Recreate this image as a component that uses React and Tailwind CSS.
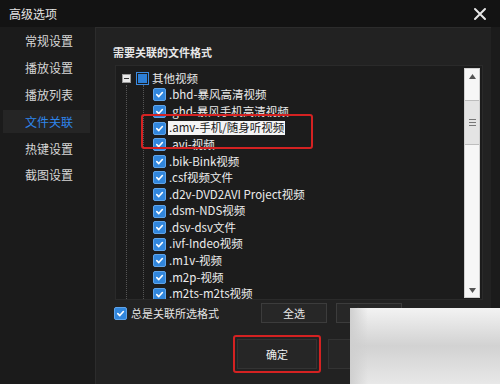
import React from 'react';

const font = { fontFamily: '"Noto Sans CJK SC", "Noto Sans", sans-serif' };

const sideItems = ['常规设置', '播放设置', '播放列表', '文件关联', '热键设置', '截图设置'];

const formats = [
  '.bhd-暴风高清视频',
  '.ghd-暴风手机高清视频',
  '.amv-手机/随身听视频',
  '.avi-视频',
  '.bik-Bink视频',
  '.csf视频文件',
  '.d2v-DVD2AVI Project视频',
  '.dsm-NDS视频',
  '.dsv-dsv文件',
  '.ivf-Indeo视频',
  '.m1v-视频',
  '.m2p-视频',
  '.m2ts-m2ts视频',
];

const Check = ({ className = '' }) => (
  <span className={`w-[13px] h-[13px] rounded-[2px] bg-[#3186dc] border border-[#5fa4ea] flex items-center justify-center shrink-0 ${className}`}>
    <svg width="9" height="9" viewBox="0 0 10 10">
      <path d="M2 5.2 L4.2 7.3 L8.2 2.8" stroke="#fff" strokeWidth="1.8" fill="none" strokeLinecap="round" strokeLinejoin="round" />
    </svg>
  </span>
);

export default function App() {
  return (
    <div className="w-[500px] h-[384px] bg-[#1b1b1b] relative overflow-hidden flex flex-col text-[#dcdcdc]" style={font}>
      {/* Title bar */}
      <div className="h-[27px] bg-[#131313] flex items-center justify-between pl-[9px] pr-[13px] shrink-0">
        <span className="text-[12px] text-[#e4e4e4]">高级选项</span>
        <svg width="14" height="14" viewBox="0 0 14 14">
          <path d="M2 2 L12 12 M12 2 L2 12" stroke="#e6e6e6" strokeWidth="2" strokeLinecap="round" />
        </svg>
      </div>

      <div className="flex-1 flex min-h-0">
        {/* Sidebar */}
        <div className="w-[95px] shrink-0 pt-[1px] flex flex-col">
          {sideItems.map((s, i) => (
            <div key={s} className="h-[26.8px] flex items-center pl-[3px] pr-[5px]">
              <div className={`w-full h-[23px] flex items-center pl-[22px] text-[12px] ${i === 3 ? 'bg-[#252525] text-[#2f86ec]' : 'text-[#d6d6d6]'}`}>
                {s}
              </div>
            </div>
          ))}
        </div>

        {/* Main panel */}
        <div className="w-[396px] bg-[#222222] border-t border-l border-[#2c2c2c] flex flex-col">
          <div className="h-[37px] flex items-center pl-[17px] pt-[12px] text-[11px] font-bold text-[#e8e8e8] shrink-0">
            需要关联的文件格式
          </div>

          {/* List box */}
          <div className="ml-[19px] w-[368px] h-[235px] bg-[#1c1c1c] border border-[#2a2a2a] flex shrink-0 relative">
            <div className="flex-1 pt-[4px] relative overflow-hidden">
              {/* tree lines */}
              <div className="absolute left-[10px] top-[19px] bottom-0 border-l border-dotted border-[#555]" />
              <div className="absolute left-[27px] top-[19px] bottom-0 border-l border-dotted border-[#555]" />

              <div className="h-[16.6px] flex items-center relative">
                <span className="ml-[6px] w-[9px] h-[9px] bg-[#e8e8e8] border border-[#9a9a9a] flex items-center justify-center">
                  <span className="w-[5px] h-[1px] bg-[#333]" />
                </span>
                <span className="ml-[5px] w-[13px] h-[13px] border border-[#3b8ae0] bg-[#1c1c1c] flex items-center justify-center">
                  <span className="w-[9px] h-[9px] bg-[#2d7fd6]" />
                </span>
                <span className="ml-[3px] text-[11.5px] text-[#e6e6e6] leading-none">其他视频</span>
              </div>
              {formats.map((f, i) => (
                <div key={f} className="h-[16.6px] flex items-center pl-[37px] relative">
                  <Check />
                  <span
                    className={`ml-[2px] text-[11.5px] leading-none whitespace-nowrap px-[1px] py-[1px] ${
                      i === 2 ? 'bg-[#f4f4f4] text-[#1a1a1a]' : 'text-[#ececec]'
                    }`}
                  >
                    {f}
                  </span>
                </div>
              ))}
              {/* red highlight */}
              <div className="absolute left-[25px] top-[48px] w-[172px] h-[35px] border-2 border-[#d42222] rounded-[3px]" />
            </div>

            {/* Scrollbar */}
            <div className="w-[16px] mt-[2px] mb-[1px] mr-[2px] bg-[#f6f6f6] border border-[#d0d0d0] flex flex-col items-center">
              <div className="h-[14px] flex items-center justify-center">
                <svg width="7" height="5" viewBox="0 0 7 5"><path d="M0 5 L3.5 0 L7 5 Z" fill="#555" /></svg>
              </div>
              <div className="w-full mt-[17px] h-[45px] bg-[#e4e4e4] border-y border-[#bdbdbd] flex flex-col items-center justify-center gap-[2px]">
                <span className="w-[7px] h-[1px] bg-[#777]" />
                <span className="w-[7px] h-[1px] bg-[#777]" />
                <span className="w-[7px] h-[1px] bg-[#777]" />
              </div>
              <div className="flex-1" />
              <div className="h-[14px] flex items-center justify-center">
                <svg width="7" height="5" viewBox="0 0 7 5"><path d="M0 0 L3.5 5 L7 0 Z" fill="#555" /></svg>
              </div>
            </div>
          </div>

          {/* Bottom options row */}
          <div className="h-[26px] flex items-center shrink-0">
            <Check className="ml-[18px]" />
            <span className="ml-[4px] text-[11px] text-[#e6e6e6]">总是关联所选格式</span>
            <div className="ml-[42px] w-[66px] h-[20px] bg-[#272727] border border-[#3c3c3c] flex items-center justify-center text-[11px] text-[#e6e6e6]">
              全选
            </div>
            <div className="ml-[9px] w-[66px] h-[20px] bg-[#272727] border border-[#3c3c3c] flex items-center justify-center text-[11px] text-[#e6e6e6]">
              全不选
            </div>
          </div>

          {/* OK row */}
          <div className="mt-[9px] flex items-start shrink-0">
            <div className="ml-[137px] w-[88px] h-[38px] border-2 border-[#d42222] rounded-[3px] p-[2px]">
              <div className="w-full h-full bg-[#262626] border border-[#333] flex items-center justify-center text-[11px] text-[#eeeeee]">
                确定
              </div>
            </div>
            <div className="ml-[7px] mt-[4px] w-[70px] h-[30px] bg-[#262626] border border-[#333]" />
          </div>
        </div>
        <div className="flex-1" />
      </div>

      {/* Watermark overlay */}
      <div className="absolute left-[350px] top-[308px] w-[150px] h-[76px] bg-gradient-to-b from-[#f3f3f3] via-[#d2d2d2] to-[#e8e8e8]">
        <div className="absolute left-0 top-0 w-[18px] h-full bg-gradient-to-r from-[#cfcfcf] to-transparent" />
      </div>
    </div>
  );
}
